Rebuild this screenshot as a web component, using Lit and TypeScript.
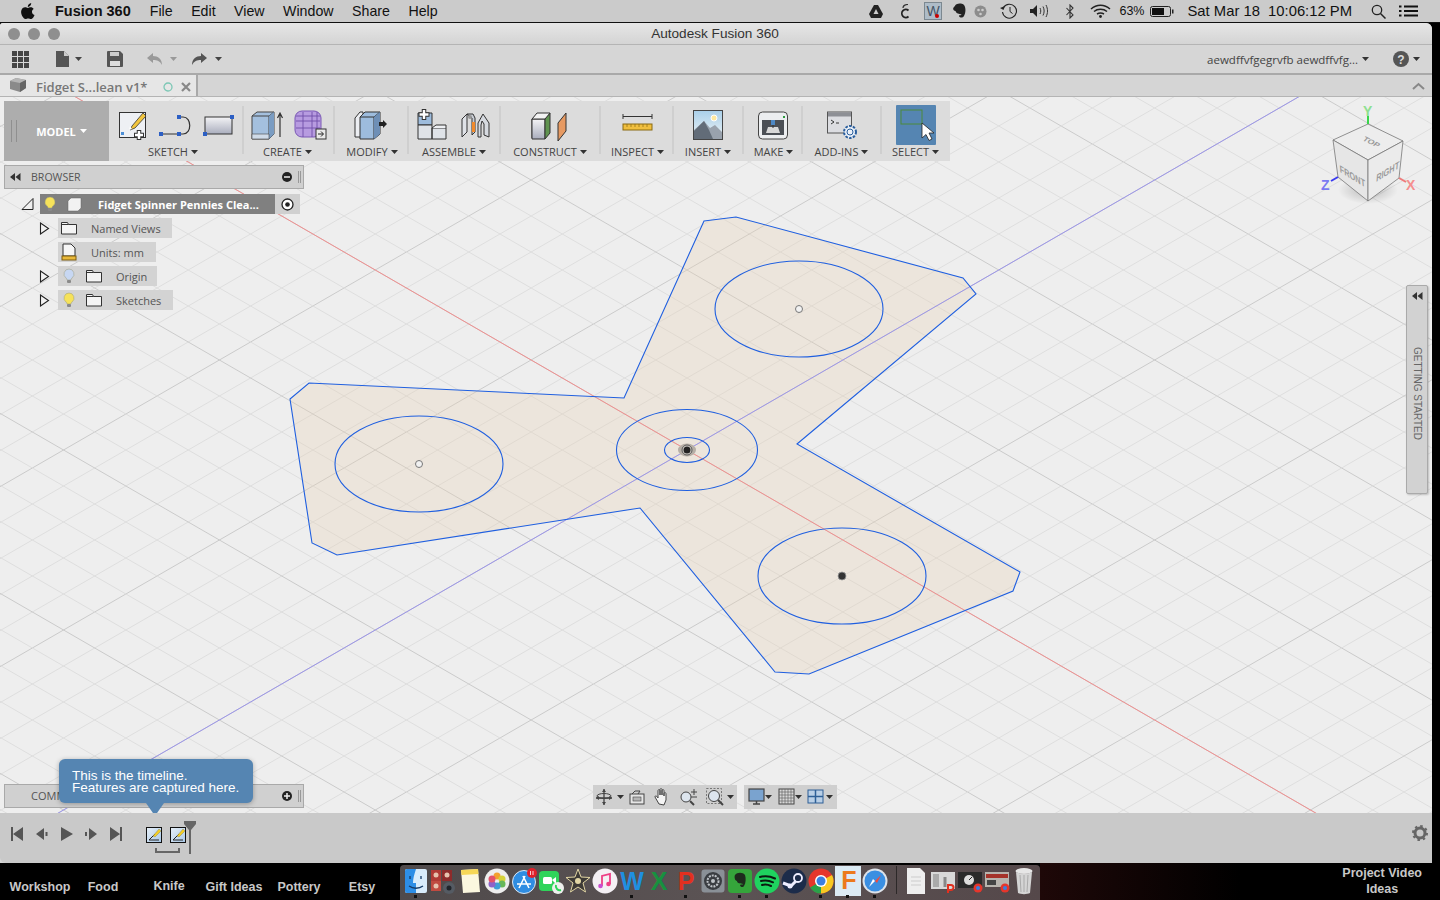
import { LitElement, html, svg, css } from "lit";
import { customElement } from "lit/decorators.js";

const OX = 687, OY = 450, M = 0.5774;
const yAt = (x: number, k: number, s: number) => OY + s * M * (x - OX) + k * 36;
const gridKeys: number[] = [];
for (let k = -45; k <= 45; k++) gridKeys.push(k);

const caret = html`<svg class="caret" width="7" height="4" viewBox="0 0 7 4"><path d="M0 0h7L3.500 4z" fill="currentColor"/></svg>`;

const tool: Record<string, any> = {
  sketch: html`<svg width="32" height="32" viewBox="0 0 32 32"><rect x="2.500" y="3.500" width="26" height="25" fill="#eef0f4" stroke="#333" stroke-width="1"/><rect x="4" y="23" width="3" height="3" fill="#4d8fd6"/><path d="M15 17L26 4l3 3-11 12-5 2z" fill="#f2c53d" stroke="#333" stroke-width=".8"/><path d="M13 17l2 3-3 1z" fill="#fff"/><path d="M22 21v10M17 26h10" stroke="#333" stroke-width="4.500"/><path d="M22 22v8M18 26h8" stroke="#fff" stroke-width="2.500"/></svg>`,
  line: html`<svg width="36" height="32" viewBox="0 0 36 32"><path d="M3 25h18M21 8h4c9 0 9 17 0 17h-4" fill="none" stroke="#333" stroke-width="1.200"/><rect x="1" y="23" width="4" height="4" fill="#2c5fc4"/><rect x="19" y="23" width="4" height="4" fill="#2c5fc4"/><rect x="19" y="6" width="4" height="4" fill="#2c5fc4"/></svg>`,
  rect: html`<svg width="32" height="32" viewBox="0 0 32 32"><defs><linearGradient id="gr" x1="0" y1="0" x2="0" y2="1"><stop offset="0" stop-color="#f4f4f6"/><stop offset="1" stop-color="#a9adbd"/></linearGradient></defs><rect x="2" y="8" width="27" height="17" fill="url(#gr)" stroke="#333"/><rect x="0" y="23" width="4" height="4" fill="#2c5fc4"/><rect x="27" y="6" width="4" height="4" fill="#2c5fc4"/></svg>`,
  box: html`<svg width="34" height="32" viewBox="0 0 34 32"><path d="M1 7l5-4h17v22l-5 5H1z" fill="#a4c0de" stroke="#444"/><path d="M1 7h17v23M18 7l5-4" fill="none" stroke="#444"/><path d="M18 7l5-4v22l-5 5z" fill="#7a9cc2"/><path d="M1 25h17v5H1z" fill="#cfdbe8" stroke="#444" stroke-width=".6"/><path d="M29 28V5M26.500 9L29 4l2.500 5" fill="none" stroke="#333" stroke-width="1.200"/></svg>`,
  mesh: html`<svg width="34" height="32" viewBox="0 0 34 32"><rect x="2" y="2" width="26" height="26" rx="7" fill="#b79be0" stroke="#7a58b5"/><path d="M3 12h24M3 19h24M10 3v25M19 3v25M24 3v25M3 7h24" stroke="#6f4fa8" stroke-width=".9" fill="none"/><rect x="23" y="20" width="10" height="10" fill="#e9e9e9" stroke="#333"/><path d="M25 25h5M28 22.500l2.500 2.500-2.500 2.500" stroke="#222" fill="none"/></svg>`,
  modify: html`<svg width="34" height="32" viewBox="0 0 34 32"><path d="M1 9l5-6h3v25H1z" fill="#eceef2" stroke="#333"/><path d="M6 8l5-5h15v22l-6 5H6z" fill="#9dbcdd" stroke="#333"/><path d="M6 8h14v22M20 8l6-5" fill="none" stroke="#333"/><path d="M20 8l6-5v22l-6 5z" fill="#6e8fb6"/><path d="M25 13h4v-2l4 4-4 4v-2h-4z" fill="#222"/></svg>`,
  assemble: html`<svg width="32" height="32" viewBox="0 0 32 32"><path d="M2 4h14v12H2z" fill="#9dbcdd" stroke="#333"/><path d="M2 16h14v14H2zM16 19h14v11H16z" fill="#dfe3e8" stroke="#333"/><path d="M16 19l4-3h10v3" fill="#eef0f3" stroke="#333"/><path d="M8 0v11M2.500 5.500h11" stroke="#333" stroke-width="4.500"/><path d="M8 1v9M3.500 5.500h9" stroke="#fff" stroke-width="2.500"/></svg>`,
  joint: html`<svg width="32" height="32" viewBox="0 0 32 32"><path d="M2 28V10l5-5v18z" fill="#dfe2e7" stroke="#333"/><path d="M7 5h6l2 4v14l-3 3V9z" fill="#c9ced6" stroke="#333"/><path d="M18 28V14l5-9 6 9v14l-5-2V15l-2-3-1 4v12z" fill="#d6dae0" stroke="#333"/><path d="M12 13h3v10h-3z" fill="#f08a2c"/><circle cx="10" cy="8" r="2" fill="#999"/></svg>`,
  construct: html`<svg width="38" height="32" viewBox="0 0 38 32"><path d="M1 10l5-5v24H1z" fill="#e4e6ea" stroke="#333"/><path d="M1 10h13v20H1z" fill="url(#gr)" stroke="#333"/><path d="M14 10l5-6v20l-5 6z" fill="#5f9350" stroke="#333"/><path d="M1 10l5-6h13l-5 6z" fill="#f3f3f3" stroke="#333"/><path d="M27 14l8-10v18l-8 10z" fill="#e79a62" stroke="#333"/></svg>`,
  inspect: html`<svg width="32" height="32" viewBox="0 0 32 32"><path d="M2 5v5M31 5v5M2 7.500h29" stroke="#333" fill="none"/><rect x="2" y="15" width="29" height="6" fill="#f0bf3f" stroke="#8a6a12"/><path d="M6 15v3M10 15v3M14 15v3M18 15v3M22 15v3M26 15v3" stroke="#8a6a12" stroke-width=".7"/></svg>`,
  insert: html`<svg width="32" height="32" viewBox="0 0 32 32"><defs><linearGradient id="sk" x1="0" y1="0" x2="0" y2="1"><stop offset="0" stop-color="#a9cfe9"/><stop offset="1" stop-color="#eef4f6"/></linearGradient></defs><rect x="1.500" y="1.500" width="29" height="29" fill="url(#sk)" stroke="#444"/><circle cx="22" cy="9" r="3" fill="#ffe9a0" stroke="#fff"/><path d="M2 30V21l10-9 6 7 5-3 7 7v7z" fill="#99a2ad"/><path d="M2 30V22l10-10 5 9 4 9z" fill="#626c78"/></svg>`,
  make: html`<svg width="32" height="32" viewBox="0 0 32 32"><rect x="1.500" y="3" width="29" height="27" rx="4" fill="#eceef0" stroke="#444"/><rect x="5" y="11" width="22" height="15" fill="#4b4f55"/><path d="M9 24l2-6h10l2 6z" fill="#d8d8d8"/><rect x="14" y="11" width="4" height="5" fill="#4e88c4"/><path d="M15.500 16h1v3h-1z" fill="#333"/><rect x="26" y="7" width="2" height="2" fill="#2d9b3f"/></svg>`,
  addins: html`<svg width="32" height="32" viewBox="0 0 32 32"><rect x="1.500" y="3" width="24" height="21" fill="#dcdde1" stroke="#555"/><rect x="2" y="3.500" width="23" height="4" fill="#8d8f95"/><path d="M5 11l3 2-3 2M10 14h3" stroke="#222" fill="none" stroke-width=".9"/><circle cx="24" cy="23" r="6" fill="#eaf0f8" stroke="#2b5f9e" stroke-width="2" stroke-dasharray="2.500 1.300"/><circle cx="24" cy="23" r="3" fill="none" stroke="#2b5f9e"/></svg>`,
  select: html`<svg width="40" height="40" viewBox="0 0 40 40"><rect width="40" height="40" rx="1" fill="#5585b2"/><rect x="5" y="5" width="21" height="14" fill="none" stroke="#4d8a3a" stroke-width="1"/><path d="M26 18v15l4-3.500 3 6 3-1.500-3-6h5z" fill="#fff" stroke="#222" stroke-width=".8"/></svg>`,
};

const groups = [
  { w: 134, label: "SKETCH", icons: ["sketch", "line", "rect"], gap: 9, dx: -3 },
  { w: 91, label: "CREATE", icons: ["box", "mesh"], gap: 8, dx: -1 },
  { w: 74, label: "MODIFY", icons: ["modify"], gap: 0, dx: 1 },
  { w: 92, label: "ASSEMBLE", icons: ["assemble", "joint"], gap: 12, dx: 0 },
  { w: 100, label: "CONSTRUCT", icons: ["construct"], gap: 0, dx: 0 },
  { w: 73, label: "INSPECT", icons: ["inspect"], gap: 0, dx: 1 },
  { w: 70, label: "INSERT", icons: ["insert"], gap: 0, dx: 0 },
  { w: 59, label: "MAKE", icons: ["make"], gap: 0, dx: 1 },
  { w: 79, label: "ADD-INS", icons: ["addins"], gap: 0, dx: 0 },
  { w: 69, label: "SELECT", icons: ["select"], gap: 0, dx: 0 },
];

const bulb = (c: string) => html`<svg width="12" height="16" viewBox="0 0 12 16"><path d="M6 1a5 5 0 0 0-3 9c.8.700 1 1.500 1 2h4c0-.5.200-1.300 1-2A5 5 0 0 0 6 1z" fill="${c}" stroke="#9a9a7a" stroke-width=".5"/><rect x="4" y="12" width="4" height="3" rx="1" fill="#8a8a8a"/></svg>`;
const folder = html`<svg width="16" height="14" viewBox="0 0 16 14"><path d="M.5 13V1.500h6l1 2h8V13z" fill="#f4f4f4" stroke="#333"/><path d="M.5 3.500h7" stroke="#333"/></svg>`;
const expander = html`<svg class="exp" width="11" height="13" viewBox="0 0 11 13"><path d="M1.500 1v11L9.500 6.500z" fill="#f2f2f2" stroke="#222" stroke-width="1.100"/></svg>`;
const unitsIc = html`<svg width="16" height="18" viewBox="0 0 16 18"><path d="M2 1h8l4 4v8H2z" fill="#f6f6f6" stroke="#333"/><rect x="1" y="13" width="14" height="4" fill="#e9b93a" stroke="#7c5d10"/></svg>`;
const sketchMini = html`<svg width="16" height="16" viewBox="0 0 16 16"><defs><linearGradient id="mini" x1="0" y1="0" x2="1" y2="1"><stop offset="0" stop-color="#e8f0f8"/><stop offset="1" stop-color="#a8c8e8"/></linearGradient></defs><rect x=".5" y=".5" width="15" height="15" fill="url(#mini)" stroke="#111"/><path d="M3 13h10M3 13l6-6" stroke="#222" fill="none"/><path d="M7 9l6-7 2 2-6 6z" fill="#f4cf25" stroke="#775" stroke-width=".4"/></svg>`;

const statusIcons = [
  { ml: 0, ic: html`<svg width="14" height="13" viewBox="0 0 14 13"><path d="M5 0h4l5 9-2 4H2L0 9z" fill="#222"/><path d="M7 4l2.500 5h-5z" fill="#cbcbcb"/></svg>` },
  { ml: 16, ic: html`<svg width="13" height="15" viewBox="0 0 13 15"><path d="M9.500 6.500a4 4 0 1 0 0 6" fill="none" stroke="#222" stroke-width="1.800"/><path d="M4 4c0-2 2-3.500 5-3.500" fill="none" stroke="#333" stroke-width="1.200"/></svg>` },
  { ml: 12, ic: html`<svg width="18" height="18" viewBox="0 0 18 18"><rect x=".5" y=".5" width="17" height="17" fill="#aebcc8" stroke="#7c8890"/><text x="9" y="14" text-anchor="middle" font-family="Liberation Sans" font-size="14" fill="#456">W</text><circle cx="13" cy="14" r="2" fill="#c00"/></svg>` },
  { ml: 10, ic: html`<svg width="14" height="17" viewBox="0 0 14 17"><path d="M3 3c0-2.500 6-3.500 8.500-1.500 2.500 2 2.500 8 .5 11.500-1.500 2.500-5 1.500-5 0 0-1.300 2.500-.5 2.500-1.500-2.500-1-5-.5-6-3.500-2.500 0-3.500-3-.5-5z" fill="#222"/></svg>` },
  { ml: 8, ic: html`<svg width="13" height="13" viewBox="0 0 13 13"><circle cx="6.500" cy="6.500" r="6" fill="#8c8c8c"/><circle cx="4.500" cy="5" r="1.300" fill="#ccc"/><circle cx="8.500" cy="5" r="1.300" fill="#ccc"/><circle cx="6.500" cy="9" r="1.300" fill="#ccc"/></svg>` },
  { ml: 13, ic: html`<svg width="18" height="16" viewBox="0 0 18 16"><path d="M3.500 4.500A7 7 0 1 1 2.500 9" fill="none" stroke="#222" stroke-width="1.100"/><path d="M0 5l3.500 2L5 3z" fill="#222"/><path d="M10 4v4.500l2.500 2" fill="none" stroke="#222"/></svg>` },
  { ml: 12, ic: html`<svg width="20" height="14" viewBox="0 0 20 14"><path d="M0 5h3l4-4v12l-4-4H0z" fill="#222"/><path d="M10 4c1 2 1 4 0 6M13 2.500c1.500 3 1.500 6 0 9M16 1c2 4 2 8 0 12" fill="none" stroke="#333"/></svg>` },
  { ml: 15, ic: html`<svg width="10" height="15" viewBox="0 0 10 15"><path d="M1.500 4l6.500 7L5 14V1l3 3L1.500 11" fill="none" stroke="#333" stroke-width="1.100"/></svg>` },
  { ml: 15, ic: html`<svg width="21" height="14" viewBox="0 0 21 14"><path d="M1 5c5.500-5 13.500-5 19 0M4 7.500c3.500-3 9.500-3 13 0M7 10c2.500-1.500 4.500-1.500 7 0" fill="none" stroke="#222" stroke-width="1.500"/><circle cx="10.500" cy="12.500" r="1.400" fill="#222"/></svg>` },
];

const qatLeft = [
  { ml: 0, ic: html`<svg width="17" height="17" viewBox="0 0 17 17"><path d="M0 0h5v5H0zM6 0h5v5H6zM12 0h5v5h-5zM0 6h5v5H0zM6 6h5v5H6zM12 6h5v5h-5zM0 12h5v5H0zM6 12h5v5H6zM12 12h5v5h-5z" fill="#444"/></svg>` },
  { ml: 27, ic: html`<svg width="13" height="16" viewBox="0 0 13 16"><path d="M0 0h8l5 5v11H0z" fill="#555"/><path d="M8 0v5h5" fill="#ccc"/></svg>` },
  { ml: 6, ic: html`<svg width="7" height="4" viewBox="0 0 7 4"><path d="M0 0h7L3.500 4z" fill="#444"/></svg>` },
  { ml: 25, ic: html`<svg width="16" height="16" viewBox="0 0 16 16"><path d="M0 1a1 1 0 0 1 1-1h12l3 3v12a1 1 0 0 1-1 1H1a1 1 0 0 1-1-1z" fill="#555"/><rect x="3" y="1" width="9" height="4" fill="#ccc"/><rect x="3" y="10" width="10" height="5" fill="#ddd"/></svg>` },
  { ml: 24, ic: html`<svg width="16" height="13" viewBox="0 0 16 13"><path d="M6 0L0 5l6 5V7c4 0 7 1 9 5 0-6-4-9-9-9z" fill="#999"/></svg>` },
  { ml: 7, ic: html`<svg width="7" height="4" viewBox="0 0 7 4"><path d="M0 0h7L3.500 4z" fill="#999"/></svg>` },
  { ml: 14, ic: html`<svg width="16" height="13" viewBox="0 0 16 13"><path d="M10 0l6 5-6 5V7c-4 0-7 1-9 5 0-6 4-9 9-9z" fill="#555"/></svg>` },
  { ml: 8, ic: html`<svg width="7" height="4" viewBox="0 0 7 4"><path d="M0 0h7L3.500 4z" fill="#444"/></svg>` },
];

const ink = "#444";
const navA = [
  { ml: 0, ic: html`<svg width="22" height="18" viewBox="0 0 22 18"><path d="M9 1v16M1 10h16" stroke="${ink}" stroke-width="1.300"/><path d="M9 1l-2 3h4zM1 10l3-2v4zM17 10l-3-2v4zM9 17l-2-3h4z" fill="${ink}"/><ellipse cx="9" cy="8" rx="7" ry="2.500" fill="none" stroke="${ink}"/></svg>` },
  { ml: 0, ic: caret },
  { ml: 3, ic: html`<svg width="20" height="18" viewBox="0 0 20 18"><rect x="3" y="6" width="14" height="10" fill="#e6e6e6" stroke="${ink}"/><rect x="6" y="9" width="8" height="4" fill="#b5b5b5" stroke="${ink}" stroke-width=".6"/><path d="M5 6l3-3h5l-2 3" fill="none" stroke="${ink}"/></svg>` },
  { ml: 6, ic: html`<svg width="20" height="18" viewBox="0 0 20 18"><path d="M6 16L2 9c0-2 2-1 3 1V3c0-2 2-2 2 0v4-5c0-2 2-2 2 0v5-4c0-2 2-2 2 0v5-2c0-2 2-2 2 0v6l-2 5z" fill="#f4f4f4" stroke="${ink}"/></svg>` },
  { ml: 6, ic: html`<svg width="20" height="18" viewBox="0 0 20 18"><circle cx="7" cy="9" r="5" fill="#dde5ee" stroke="${ink}"/><path d="M11 13l4 4" stroke="${ink}" stroke-width="2"/><path d="M15 1v6M12 4h6M12 9h6" stroke="${ink}"/></svg>` },
  { ml: 7, ic: html`<svg width="20" height="18" viewBox="0 0 20 18"><rect x=".5" y=".5" width="15" height="15" fill="none" stroke="#777" stroke-dasharray="2 1.500"/><circle cx="8" cy="8" r="5.500" fill="#dde5ee" stroke="${ink}"/><path d="M12 12l5 5" stroke="${ink}" stroke-width="2"/></svg>` },
  { ml: 1, ic: caret },
];
const navB = [
  { ml: 1, ic: html`<svg width="20" height="18" viewBox="0 0 20 18"><rect x="2" y="1" width="15" height="12" fill="#7aa3cf" stroke="${ink}" stroke-width="1.200"/><path d="M6 16h7M9.500 13v3" stroke="${ink}" stroke-width="1.500"/></svg>` },
  { ml: -2, ic: caret },
  { ml: 6, ic: html`<svg width="18" height="18" viewBox="0 0 18 18"><rect x="1" y="1" width="15" height="15" fill="#d9d9d9" stroke="${ink}"/><path d="M4 1v15M7 1v15M10 1v15M13 1v15M1 4h15M1 7h15M1 10h15M1 13h15" stroke="#666" stroke-width=".7"/></svg>` },
  { ml: -1, ic: caret },
  { ml: 5, ic: html`<svg width="18" height="18" viewBox="0 0 18 18"><rect x="1" y="2" width="15" height="13" fill="#b9cfe6" stroke="#2e5f96"/><path d="M8.500 2v13M1 8.500h15" stroke="#2e5f96" stroke-width="1.500"/></svg>` },
  { ml: 1, ic: caret },
];
const place = (items: { ml: number; ic: any }[]) =>
  items.map((i) => html`<span class="pl" style="margin-left:${i.ml}px">${i.ic}</span>`);

const docIcons: { n: string; dot?: boolean; ic: any }[] = [
  { n: "finder", dot: true, ic: html`<svg width="24" height="26" viewBox="0 0 24 26"><rect x="1" y="1" width="22" height="24" rx="2" fill="#d9ecfb"/><path d="M1 3a2 2 0 0 1 2-2h9c-2 6-3 10-3 14h3v10H3a2 2 0 0 1-2-2z" fill="#2d8ee6"/><path d="M6 8v3M17 8v3M5 18c4 3 10 3 14 0" stroke="#153a66" stroke-width="1.300" fill="none"/></svg>` },
  { n: "booth", ic: html`<svg width="26" height="26" viewBox="0 0 26 26"><rect x="1" y="2" width="10" height="11" fill="#b03a35"/><rect x="12" y="2" width="10" height="11" fill="#8e2b2b"/><rect x="1" y="13" width="10" height="10" fill="#c04a40"/><circle cx="6" cy="7" r="2.500" fill="#e7c2ae"/><circle cx="17" cy="7" r="2.500" fill="#e7c2ae"/><circle cx="6" cy="18" r="2.500" fill="#e7c2ae"/><circle cx="19" cy="20" r="6" fill="#555b63"/><circle cx="19" cy="20" r="2.500" fill="#20242a"/></svg>` },
  { n: "notes", ic: html`<svg width="22" height="26" viewBox="0 0 22 26"><path d="M2 2l17-1 2 23-17 1z" fill="#fbf7df"/><path d="M2 2l17-1 .5 5L2.500 7z" fill="#f6d757"/></svg>` },
  { n: "photos", ic: html`<svg width="26" height="26" viewBox="0 0 26 26"><circle cx="13" cy="13" r="12.500" fill="#eee"/><circle cx="13" cy="8" r="3.500" fill="#f3a12f"/><circle cx="18" cy="11" r="3.500" fill="#d6d33b"/><circle cx="18" cy="16" r="3.500" fill="#67b85a"/><circle cx="13" cy="18" r="3.500" fill="#3f9fd6"/><circle cx="8" cy="16" r="3.500" fill="#8d63c9"/><circle cx="8" cy="11" r="3.500" fill="#e4526b"/></svg>` },
  { n: "store", ic: html`<svg width="26" height="26" viewBox="0 0 26 26"><circle cx="13" cy="14" r="11.500" fill="#2f8de2" stroke="#dfe8f2"/><path d="M8 20l6-12M18 20L12 8M6 16h14" stroke="#fff" stroke-width="1.600" fill="none"/><circle cx="21" cy="5" r="5" fill="#e0202a"/><path d="M19.500 3v4M22 3v4" stroke="#fff" stroke-width=".8"/></svg>` },
  { n: "facetime", ic: html`<svg width="26" height="26" viewBox="0 0 26 26"><rect x="1" y="3" width="20" height="20" rx="4" fill="#2fd45a"/><rect x="5" y="9" width="9" height="7" rx="1.500" fill="#fff"/><path d="M14 12l4-3v7z" fill="#fff"/><circle cx="20" cy="20" r="6" fill="#eef0ee"/><path d="M18 17c-1 3 2 6 5 5" stroke="#2fd45a" stroke-width="2" fill="none"/></svg>` },
  { n: "imovie", ic: html`<svg width="26" height="26" viewBox="0 0 26 26"><path d="M13 1l3 8 9 .5-7 5.500 2.500 9L13 19l-7.500 5L8 15 1 9.500 10 9z" fill="#3d3a36" stroke="#e2d6a4" stroke-width="1"/><circle cx="13" cy="13" r="3" fill="#e2d6a4"/></svg>` },
  { n: "itunes", ic: html`<svg width="26" height="26" viewBox="0 0 26 26"><circle cx="13" cy="13" r="12.500" fill="#f4f0f4"/><path d="M10 18V8l8-2v10" stroke="#ee3f86" stroke-width="1.800" fill="none"/><circle cx="8.500" cy="18" r="2.300" fill="#c84fd0"/><circle cx="16.500" cy="16" r="2.300" fill="#ee3f86"/></svg>` },
  { n: "word", dot: true, ic: html`<svg width="26" height="26" viewBox="0 0 26 26"><text class="logo" x="13" y="22" fill="#1f8fe0">W</text></svg>` },
  { n: "excel", ic: html`<svg width="26" height="26" viewBox="0 0 26 26"><text class="logo" x="13" y="22" fill="#17913f">X</text></svg>` },
  { n: "ppt", dot: true, ic: html`<svg width="26" height="26" viewBox="0 0 26 26"><text class="logo" x="13" y="22" fill="#e3301f">P</text></svg>` },
  { n: "prefs", ic: html`<svg width="24" height="24" viewBox="0 0 24 24"><rect x=".5" y=".5" width="23" height="23" rx="3" fill="#8a9097"/><circle cx="12" cy="12" r="9" fill="#3a3d42"/><circle cx="12" cy="12" r="5.500" fill="none" stroke="#bfc3c8" stroke-width="2" stroke-dasharray="2 1"/><circle cx="12" cy="12" r="2" fill="#bfc3c8"/></svg>` },
  { n: "evernote", dot: true, ic: html`<svg width="26" height="26" viewBox="0 0 26 26"><rect x="1" y="1" width="24" height="24" rx="4" fill="#35a53b"/><path d="M8 7c2-3 8-3 10 0 1 3 1 8-1 11-1 2-4 1-4-1 1-1 3 0 3-1-2-1-6 0-6-3-2 0-3-4-2-6z" fill="#1e2a1d"/></svg>` },
  { n: "spotify", dot: true, ic: html`<svg width="26" height="26" viewBox="0 0 26 26"><circle cx="13" cy="13" r="12.500" fill="#1fd35f"/><path d="M6 9c5-1.500 10-1 15 1.500M7 13c4-1 8-.7 12 1.300M8 17c3-.8 6-.5 9 1" stroke="#0b1a10" stroke-width="2" fill="none" stroke-linecap="round"/></svg>` },
  { n: "steam", ic: html`<svg width="26" height="26" viewBox="0 0 26 26"><circle cx="13" cy="13" r="12.500" fill="#1c2c4a"/><circle cx="17" cy="10" r="4" fill="none" stroke="#eef" stroke-width="1.800"/><path d="M2 15l8 3 5-5" stroke="#eef" stroke-width="3" fill="none"/><circle cx="9" cy="18" r="2.500" fill="#eef"/></svg>` },
  { n: "chrome", dot: true, ic: html`<svg width="26" height="26" viewBox="0 0 26 26"><circle cx="13" cy="13" r="12.500" fill="#e5362c"/><path d="M13 13L2.200 19.500A12.500 12.500 0 0 0 13 25.500z" fill="#2aa14a"/><path d="M13 13v12.500A12.500 12.500 0 0 0 24 7z" fill="#f8c922"/><circle cx="13" cy="13" r="6" fill="#fff"/><circle cx="13" cy="13" r="4.500" fill="#3a7fe0"/></svg>` },
  { n: "fusion", dot: true, ic: html`<svg width="26" height="30" viewBox="0 0 26 30"><rect width="26" height="30" fill="#dcebf4"/><text class="logo" x="14" y="23" fill="#ec7a1c">F</text></svg>` },
  { n: "safari", dot: true, ic: html`<svg width="26" height="26" viewBox="0 0 26 26"><circle cx="13" cy="13" r="12.500" fill="#dde3ea"/><circle cx="13" cy="13" r="10.500" fill="#3a8fe2"/><path d="M19 7l-4 8-2-2z" fill="#f24a3c"/><path d="M7 19l4-8 2 2z" fill="#fff"/></svg>` },
];
const docRight = [
  html`<svg width="22" height="28" viewBox="0 0 22 28"><path d="M2 1h13l5 5v21H2z" fill="#eeeeee"/><path d="M6 10h10M6 14h10M6 18h10" stroke="#ccc"/></svg>`,
  html`<svg width="26" height="24" viewBox="0 0 26 24"><rect x="1" y="3" width="24" height="17" fill="#d8d8d8"/><rect x="3" y="5" width="6" height="13" fill="#aaa"/><path d="M15 8v10" stroke="#888" stroke-width="3"/><path d="M18 24v-8h3a2 2 0 0 1 0 5h-3" fill="none" stroke="#e3301f" stroke-width="2"/></svg>`,
  html`<svg width="26" height="24" viewBox="0 0 26 24"><rect x="1" y="3" width="24" height="16" fill="#2a2a2a"/><circle cx="12" cy="11" r="5" fill="#ddd"/><path d="M12 11l3-3" stroke="#222"/><circle cx="21" cy="19" r="4.500" fill="#e5362c"/><circle cx="21" cy="19" r="2" fill="#3a7fe0"/></svg>`,
  html`<svg width="26" height="24" viewBox="0 0 26 24"><rect x="1" y="3" width="24" height="15" fill="#b8b4ae"/><rect x="2" y="5" width="22" height="4" fill="#a5332a"/><rect x="3" y="11" width="9" height="5" fill="#444"/><circle cx="21" cy="19" r="4.500" fill="#e5362c"/><circle cx="21" cy="19" r="2" fill="#3a7fe0"/></svg>`,
  html`<svg width="20" height="28" viewBox="0 0 20 28"><ellipse cx="10" cy="4" rx="8.500" ry="3" fill="#e6e6e6"/><path d="M2 5l2 21c3 1.500 9 1.500 12 0l2-21c-4 2-12 2-16 0z" fill="#d4d4d4"/><path d="M6 8l1 17M10 8v17M14 8l-1 17" stroke="#aaa"/></svg>`,
];

const sketchPts = "704,221 736,217 963,278 976,294 797,444 1020,572 1013,591 809,674 775,672 640,508 337,555 312,543 290,399 309,383 624,398";

@customElement("app-root")
export class AppRoot extends LitElement {
  static styles = css`
    :host { display: block; width: 1440px; height: 900px; overflow: hidden; font-family: "Open Sans", "Liberation Sans", sans-serif; background: #000; }
    .pl { display: block; flex: none; }
    .pl svg { display: block; }
    .menubar { height: 22px; background: #cbcbcb; border-bottom: 1px solid #111; display: flex; align-items: center; font-family: "Liberation Sans", sans-serif; font-size: 14.2px; color: #111; }
    .menus { display: flex; align-items: center; padding-left: 21px; flex: 1; }
    .menus .apple { margin-right: 20px; display: block; }
    .menus b { margin-right: 19px; font-size: 14.500px; }
    .menus span { margin-right: 18.500px; }
    .status { display: flex; align-items: center; }
    .status svg { display: block; }
    .pct { font-size: 12.500px; margin-left: 8px; }
    .batt { margin-left: 5px; }
    .clock { margin-left: 14px; font-size: 14.800px; white-space: pre; }
    .search { margin-left: 19px; }
    .list { margin: 0 22px 0 13px; }
    .win { width: 1432px; height: 840px; background: #d5d5d5; border-radius: 3px 6px 0 0; display: flex; flex-direction: column; overflow: hidden; }
    .title { height: 21px; background: linear-gradient(#e6e6e6, #d4d4d4); border-bottom: 1px solid #b4b4b4; display: flex; align-items: center; position: relative; padding-left: 8px; gap: 8px; flex: none; }
    .light { width: 12px; height: 12px; border-radius: 50%; background: #8f8f8f; }
    .title-text { position: absolute; left: 0; width: 1430px; top: 3px; text-align: center; font-family: "Liberation Sans", sans-serif; font-size: 13.600px; color: #333; }
    .qat { height: 28px; flex: none; display: flex; align-items: center; background: #d6d6d6; border-bottom: 2px solid #a9a9a9; padding-left: 12px; }
    .qat svg { display: block; }
    .qat .account { margin-left: auto; font-size: 11.500px; color: #444; display: flex; align-items: center; gap: 4px; }
    .qat .help { margin: 0 12px 0 24px; display: flex; align-items: center; gap: 4px; color: #444; }
    .tabs { height: 21px; flex: none; display: flex; background: #d5d5d5; border-bottom: 1px solid #b4b4b4; color: #666; align-items: stretch; }
    .tab { width: 198px; background: #e6e6e6; border-right: 2px solid #a9a9a9; display: flex; align-items: center; padding: 3px 0 0 10px; box-sizing: border-box; font-size: 13px; font-weight: 600; color: #777; }
    .tab > svg:first-child { margin-top: -5px; }
    .tab .name { margin-left: 10px; width: 113px; white-space: nowrap; }
    .tab .o { margin-left: 14px; }
    .tab .x { margin-left: 8px; }
    .chev { margin-left: auto; margin-right: 7px; align-self: center; }
    .canvas { flex: 1; position: relative; background: #eeeeee; overflow: hidden; }
    .canvas > svg.scene { display: block; }
    .ribbon { position: absolute; left: 4px; top: 4px; height: 60px; display: flex; background: #dcdcdc; }
    .model { width: 105px; background: #adadad; color: #fff; display: flex; align-items: center; justify-content: center; gap: 4px; font-size: 11px; font-weight: 700; position: relative; padding-left: 10px; box-sizing: border-box; }
    .model::before { content: ""; position: absolute; left: 7px; top: 19px; width: 4px; height: 22px; border-left: 1px solid #8f8f8f; border-right: 1px solid #8f8f8f; }
    .group { display: flex; flex-direction: column; align-items: center; position: relative; box-sizing: border-box; padding-top: 4px; }
    .group + .group::before { content: ""; position: absolute; left: -1px; top: 5px; bottom: 7px; width: 2px; background: #cfcfcf; }
    .icons { height: 40px; display: flex; align-items: center; justify-content: center; }
    .icons svg { display: block; }
    .label { font-size: 11px; color: #444; display: flex; align-items: center; gap: 3px; line-height: 14px; white-space: nowrap; }
    .caret { display: block; color: #333; }
    .panel { position: absolute; left: 4px; width: 300px; height: 24px; box-sizing: border-box; background: #d0d0d0; border: 1px solid #a9a9a9; display: flex; align-items: center; font-size: 11px; color: #555; }
    .panel.browser { top: 68px; padding-left: 5px; }
    .panel.browser .t { margin-left: 10px; font-size: 10.600px; }
    .panel.comm { top: 687px; padding: 0 0 1px 26px; }
    .panel .end { margin-left: auto; margin-right: 2px; display: flex; align-items: center; gap: 6px; }
    .grip { width: 3px; height: 12px; border-left: 1px solid #999; border-right: 1px solid #999; box-sizing: border-box; }
    .tree { position: absolute; left: 0; top: 97px; font-size: 11px; color: #555; display: flex; flex-direction: column; gap: 4px; }
    .row { height: 20px; display: flex; align-items: center; position: relative; }
    .exp { position: absolute; left: 39px; top: 4px; }
    .box { margin-left: 58px; height: 20px; background: #d3d3d3; display: flex; align-items: center; box-sizing: border-box; white-space: nowrap; }
    .box svg { display: block; flex: none; }
    .m18 { margin: 0 14px 0 3px; display: flex; }
    .m-u { margin: 0 14px 0 3px; display: flex; }
    .m-b { margin: 0 11px 0 5px; display: flex; }
    .m-f { margin-right: 14px; display: flex; }
    .r0 { margin-left: 21px; gap: 0; }
    .r0 .tri { display: block; margin-right: 6px; }
    .r0 .dark { width: 235px; height: 20px; background: #808080; color: #fff; font-weight: 700; display: flex; align-items: center; box-sizing: border-box; padding-left: 4px; white-space: nowrap; }
    .r0 .cb { margin: 0 16px 0 11px; }
    .r0 .tail { width: 25px; height: 20px; background: #d0d0d0; display: flex; align-items: center; justify-content: center; }
    .tip { position: absolute; left: 59px; top: 662px; width: 194px; height: 44px; background: #5585b2; border-radius: 6px; color: #fff; font-family: "Liberation Sans", sans-serif; font-size: 13.500px; line-height: 12px; padding: 11px 0 0 13px; box-sizing: border-box; box-shadow: 0 1px 5px rgba(0,0,0,.3); z-index: 2; white-space: nowrap; }
    .tip::after { content: ""; position: absolute; left: 87px; bottom: -13px; border: 9px solid transparent; border-bottom: 0; border-top: 13px solid #5585b2; }
    .nav { position: absolute; top: 688px; height: 24px; background: #cfcfcf; display: flex; align-items: center; color: #333; box-sizing: border-box; padding-left: 2px; }
    .nav svg { display: block; }
    .nav.a { left: 593px; width: 144px; }
    .nav.b { left: 744px; width: 93px; }
    .cube { position: absolute; left: 1310px; top: 0; display: block; }
    .cube text { font-family: "Liberation Sans", sans-serif; font-weight: 700; }
    .gs { position: absolute; left: 1406px; top: 188px; width: 22px; height: 209px; box-sizing: border-box; background: #d2d2d2; border: 1px solid #aaa; border-radius: 2px; box-shadow: 1px 1px 2px rgba(0,0,0,.2); display: flex; flex-direction: column; align-items: center; padding-top: 6px; }
    .gs .v { writing-mode: vertical-rl; font-family: "Liberation Sans", sans-serif; font-size: 10px; color: #666; margin-top: 47px; white-space: nowrap; }
    .timeline { height: 50px; flex: none; background: #c9c9c9; display: flex; align-items: center; padding-left: 10px; position: relative; border-radius: 0 0 0 6px; }
    .timeline svg { display: block; }
    .tl-ctl { display: flex; align-items: center; gap: 10px; color: #555; margin-top: -8px; }
    .tl-ctl .g1 { margin-left: 1px; }
    .feat { display: flex; gap: 8px; margin-left: 23px; margin-top: -6px; }
    .bracket { position: absolute; left: 155px; top: 35px; width: 25px; height: 5px; border: 2px solid #666; border-top: 0; box-sizing: border-box; }
    .marker { position: absolute; left: 184px; top: 8px; }
    .gear { position: absolute; right: 4px; top: 12px; }
    .bottom { height: 37px; background: #000; position: relative; display: flex; font-family: "Liberation Sans", sans-serif; font-weight: 700; font-size: 12.500px; color: #c8c8c8; }
    .marks { width: 400px; position: relative; display: flex; padding-top: 17px; }
    .marks span { position: absolute; transform: translateX(-50%); white-space: nowrap; }
    .dock { width: 640px; height: 35px; margin-top: 2px; background: linear-gradient(90deg, #4f4a4b, #5b5354 50%, #55484a); border-radius: 4px 4px 0 0; display: flex; align-items: flex-start; padding-left: 2px; box-sizing: border-box; }
    .slot { width: 27px; height: 31px; flex: none; display: flex; align-items: center; justify-content: center; position: relative; }
    .slot svg { display: block; }
    .slot.dot::after { content: ""; position: absolute; left: 12px; top: 30px; width: 3px; height: 3px; background: #111; }
    .sep { width: 1px; height: 28px; margin: 1px 5px 0 8px; background: #2c2828; flex: none; }
    .logo { font-family: "Liberation Sans", sans-serif; font-weight: 700; font-size: 25px; text-anchor: middle; }
    .gl { position: relative; flex: 1; }
    .glow { position: absolute; left: 0; top: 0; width: 200px; height: 37px; background: linear-gradient(90deg, #1e0808, #000); }
    .proj { position: absolute; right: 18px; top: 2px; text-align: center; line-height: 16px; }
  `;

  private scene() {
    const lines = gridKeys.map((k) => {
      const stroke = k % 5 === 0 ? "#cbcbcb" : "#dedede";
      return svg`<line x1="0" y1="${yAt(0, k, 1)}" x2="1432" y2="${yAt(1432, k, 1)}" stroke="${stroke}"/><line x1="0" y1="${yAt(0, k, -1)}" x2="1432" y2="${yAt(1432, k, -1)}" stroke="${stroke}"/>`;
    });
    return html`<svg class="scene" width="1432" height="716" viewBox="0 97 1432 716">
      ${lines}
      <polygon points="${sketchPts}" fill="#e8d0b4" fill-opacity=".3"/>
      <line x1="0" y1="${yAt(0, 0, 1)}" x2="1432" y2="${yAt(1432, 0, 1)}" stroke="#f09090"/>
      <line x1="0" y1="${yAt(0, 0, -1)}" x2="1432" y2="${yAt(1432, 0, -1)}" stroke="#9c96ea"/>
      <polygon points="${sketchPts}" fill="none" stroke="#1f5fe0" stroke-width="1.100"/>
      <ellipse cx="799" cy="309" rx="84" ry="48" fill="none" stroke="#1f5fe0" stroke-width="1.100"/>
      <ellipse cx="419" cy="464" rx="84" ry="48" fill="none" stroke="#1f5fe0" stroke-width="1.100"/>
      <ellipse cx="842" cy="576" rx="84" ry="48" fill="none" stroke="#1f5fe0" stroke-width="1.100"/>
      <ellipse cx="687" cy="450" rx="70.500" ry="40.500" fill="none" stroke="#1f5fe0" stroke-width="1.100"/>
      <ellipse cx="687" cy="450" rx="22.500" ry="12.500" fill="none" stroke="#1f5fe0" stroke-width="1.100"/>
      <circle cx="799" cy="309" r="3.500" fill="#f2f2f2" stroke="#777"/>
      <circle cx="419" cy="464" r="3.500" fill="#f2f2f2" stroke="#777"/>
      <circle cx="842" cy="576" r="4" fill="#333" stroke="#999" stroke-width=".8"/>
      <ellipse cx="687" cy="450" rx="9" ry="6.500" fill="#b5aea6"/>
      <circle cx="687" cy="450" r="5" fill="#d8d4ce" stroke="#555"/>
      <circle cx="687" cy="450" r="3.500" fill="#222"/>
    </svg>`;
  }

  private ribbon() {
    return html`<div class="ribbon">
      <div class="model">MODEL <svg width="7" height="4" viewBox="0 0 7 4"><path d="M0 0h7L3.500 4z" fill="#fff"/></svg></div>
      ${groups.map(
        (g) => html`<div class="group" style="width:${g.w}px">
          <div class="icons" style="gap:${g.gap}px">${g.icons.map((i) => tool[i])}</div>
          <div class="label" style="transform:translateX(${g.dx}px)">${g.label} ${caret}</div>
        </div>`
      )}
    </div>`;
  }

  private tree() {
    const row = (expand: boolean, w: number, content: any) => html`<div class="row">${expand ? expander : ""}<div class="box" style="width:${w}px">${content}</div></div>`;
    return html`<div class="tree">
      <div class="row r0">
        <svg class="tri" width="13" height="12" viewBox="0 0 13 12"><path d="M1 11.500L12 .5v11z" fill="#efefef" stroke="#222"/></svg>
        <div class="dark">${bulb("#f6e25a")}<svg class="cb" width="15" height="15" viewBox="0 0 15 15"><path d="M1 4l3-3h10v10l-3 3H1z" fill="#f2f2f2" stroke="#666" stroke-width=".5"/></svg>Fidget Spinner Pennies Clea...</div>
        <div class="tail"><svg width="13" height="13" viewBox="0 0 13 13"><circle cx="6.500" cy="6.500" r="5.500" fill="#fff" stroke="#222" stroke-width="1.300"/><circle cx="6.500" cy="6.500" r="2.300" fill="#222"/></svg></div>
      </div>
      ${row(true, 114, html`<span class="m18">${folder}</span>Named Views`)}
      ${row(false, 98, html`<span class="m-u">${unitsIc}</span>Units: mm`)}
      ${row(true, 99, html`<span class="m-b">${bulb("#c7d7f2")}</span><span class="m-f">${folder}</span>Origin`)}
      ${row(true, 115, html`<span class="m-b">${bulb("#f6e25a")}</span><span class="m-f">${folder}</span>Sketches`)}
    </div>`;
  }

  private cube() {
    return html`<svg class="cube" width="122" height="110" viewBox="1310 97 122 110">
      <defs><radialGradient id="sh"><stop offset="0" stop-color="#000" stop-opacity=".22"/><stop offset="1" stop-color="#000" stop-opacity="0"/></radialGradient></defs>
      <ellipse cx="1368" cy="190" rx="30" ry="14" fill="url(#sh)"/>
      <path d="M1368 124l35 17-35 19-35-20z" fill="#ededed" stroke="#777" stroke-width=".8"/>
      <path d="M1333 140l35 20v41l-30-24z" fill="#e6e6e6" stroke="#777" stroke-width=".8"/>
      <path d="M1403 141l-35 19v41l31-23z" fill="#ebebeb" stroke="#777" stroke-width=".8"/>
      <path d="M1368 124v-8" stroke="#38d64a" stroke-width="2"/>
      <path d="M1338 177l-7 4" stroke="#3b3bf0" stroke-width="2"/>
      <path d="M1399 178l7 4" stroke="#f07a7a" stroke-width="2"/>
      <text x="1363" y="116" font-size="14" fill="#8fe08f">Y</text>
      <text x="1321" y="190" font-size="14" fill="#7a7af2">Z</text>
      <text x="1406" y="190" font-size="14" fill="#f58f8f">X</text>
      <text font-size="9" fill="#9a9a9a" transform="matrix(.85 .42 -.55 .6 1362 140)">TOP</text>
      <text font-size="9" fill="#9a9a9a" transform="matrix(.82 .5 .1 1.150 1340 172)">FRONT</text>
      <text font-size="9" fill="#9a9a9a" transform="matrix(.82 -.5 -.1 1.150 1376 182)">RIGHT</text>
    </svg>`;
  }

  render() {
    return html`
      <div class="menubar">
        <div class="menus">
          <svg class="apple" width="14" height="16" viewBox="0 0 14 16"><path d="M10.200 0c.1 1.200-.4 2.100-1 2.800-.6.700-1.500 1.200-2.400 1.100-.1-1 .4-2 1-2.700C8.400.6 9.400.1 10.200 0zM13.500 12c-.4 1-.6 1.400-1.100 2.200-.7 1-1.600 1.800-2.600 1.800-1 0-1.300-.6-2.600-.6-1.300 0-1.700.6-2.700.6-1.100 0-1.900-1-2.600-2C.2 11.700-.5 8.500.7 6.500 1.400 5.100 2.700 4.300 4 4.300c1.200 0 2 .7 2.900.7.900 0 1.500-.7 2.900-.7 1.100 0 2.200.6 2.900 1.600-2.600 1.500-2.200 5 .8 6.100z" fill="#111"/></svg>
          <b>Fusion 360</b><span>File</span><span>Edit</span><span>View</span><span>Window</span><span>Share</span><span>Help</span>
        </div>
        <div class="status">
          ${place(statusIcons)}
          <span class="pct">63%</span>
          <svg class="batt" width="24" height="11" viewBox="0 0 24 11"><rect x=".5" y=".5" width="20" height="10" rx="2" fill="none" stroke="#222"/><rect x="2" y="2" width="12" height="7" fill="#111"/><rect x="22" y="3.500" width="1.500" height="4" fill="#222"/></svg>
          <span class="clock">Sat Mar 18  10:06:12 PM</span>
          <svg class="search" width="15" height="15" viewBox="0 0 15 15"><circle cx="6" cy="6" r="4.700" fill="none" stroke="#222" stroke-width="1.300"/><path d="M9.500 9.500l5 5" stroke="#222" stroke-width="1.500"/></svg>
          <svg class="list" width="19" height="12" viewBox="0 0 19 12"><path d="M0 1.500h2.500M5 1.500h14M0 6h2.500M5 6h14M0 10.500h2.500M5 10.500h14" stroke="#111" stroke-width="1.800"/></svg>
        </div>
      </div>
      <div class="win">
        <div class="title"><div class="light"></div><div class="light"></div><div class="light"></div><div class="title-text">Autodesk Fusion 360</div></div>
        <div class="qat">
          ${place(qatLeft)}
          <div class="account">aewdffvfgegrvfb aewdffvfg... ${caret}</div>
          <div class="help"><svg width="16" height="16" viewBox="0 0 16 16"><circle cx="8" cy="8" r="8" fill="#555"/><text x="8" y="12.500" text-anchor="middle" font-family="Liberation Sans" font-weight="700" font-size="12" fill="#ddd">?</text></svg>${caret}</div>
        </div>
        <div class="tabs">
          <div class="tab">
            <svg width="16" height="14" viewBox="0 0 16 14"><path d="M0 3l6-3 10 2v8l-6 4-10-3z" fill="#8a8a8a"/><path d="M0 3l10 2 6-3-10-2z" fill="#b5b5b5"/><path d="M10 5v9l6-4V2z" fill="#666"/></svg>
            <span class="name">Fidget S...lean v1*</span>
            <svg class="o" width="10" height="10" viewBox="0 0 10 10"><circle cx="5" cy="5" r="4" fill="none" stroke="#7cc7b5" stroke-width="1.300"/></svg>
            <svg class="x" width="10" height="10" viewBox="0 0 10 10"><path d="M1 1l8 8M9 1l-8 8" stroke="#888" stroke-width="2.200"/></svg>
          </div>
          <svg class="chev" width="13" height="8" viewBox="0 0 13 8"><path d="M1 7l5.500-5L12 7" fill="none" stroke="#888" stroke-width="2"/></svg>
        </div>
        <div class="canvas">
          ${this.scene()}
          ${this.ribbon()}
          <div class="panel browser">
            <svg width="11" height="8" viewBox="0 0 11 8"><path d="M5 0v8L0 4zM10.500 0v8l-5-4z" fill="#333"/></svg>
            <span class="t">BROWSER</span>
            <div class="end"><svg width="10" height="10" viewBox="0 0 10 10"><circle cx="5" cy="5" r="5" fill="#222"/><path d="M2 5h6" stroke="#eee" stroke-width="1.500"/></svg><span class="grip"></span></div>
          </div>
          ${this.tree()}
          <div class="panel comm">COMMENTS
            <div class="end"><svg width="10" height="10" viewBox="0 0 10 10"><circle cx="5" cy="5" r="5" fill="#222"/><path d="M2 5h6M5 2v6" stroke="#eee" stroke-width="1.500"/></svg><span class="grip"></span></div>
          </div>
          <div class="tip">This is the timeline.<br/>Features are captured here.</div>
          <div class="nav a">${place(navA)}</div>
          <div class="nav b">${place(navB)}</div>
          ${this.cube()}
          <div class="gs">
            <svg width="11" height="8" viewBox="0 0 11 8"><path d="M5 0v8L0 4zM10.500 0v8l-5-4z" fill="#333"/></svg>
            <span class="v">GETTING STARTED</span>
          </div>
        </div>
        <div class="timeline">
          <div class="tl-ctl">
            <svg width="14" height="14" viewBox="0 0 14 14"><path d="M1 0h2v14H1zM13 0v14L3 7z" fill="#555"/></svg>
            <svg class="g1" width="14" height="14" viewBox="0 0 14 14"><path d="M9 1v12L1 7zM10.500 5h2v4h-2z" fill="#555"/></svg>
            <svg class="g1" width="14" height="16" viewBox="0 0 14 16"><path d="M1 1v14l12-7z" fill="#555"/></svg>
            <svg width="14" height="14" viewBox="0 0 14 14"><path d="M5 1v12l8-6zM1 5h2v4H1z" fill="#555"/></svg>
            <svg class="g1" width="14" height="14" viewBox="0 0 14 14"><path d="M1 0v14l10-7zM11 0h2v14h-2z" fill="#555"/></svg>
          </div>
          <div class="feat">${sketchMini}${sketchMini}</div>
          <div class="bracket"></div>
          <svg class="marker" width="12" height="33" viewBox="0 0 12 33"><path d="M0 0h12v3l-5 6v24H5V9L0 3z" fill="#666"/></svg>
          <svg class="gear" width="16" height="16" viewBox="0 0 16 16"><circle cx="8" cy="8" r="5" fill="none" stroke="#666" stroke-width="3"/><circle cx="8" cy="8" r="7" fill="none" stroke="#666" stroke-width="2" stroke-dasharray="2.500 3"/></svg>
        </div>
      </div>
      <div class="bottom">
        <div class="marks">
          <span style="left:40px">Workshop</span><span style="left:103px">Food</span><span style="left:169px;top:16px">Knife</span><span style="left:234px">Gift Ideas</span><span style="left:299px">Pottery</span><span style="left:362px">Etsy</span>
        </div>
        <div class="dock">
          ${docIcons.map((d) => html`<div class="slot ${d.dot ? "dot" : ""}">${d.ic}</div>`)}
          <div class="sep"></div>
          ${docRight.map((d) => html`<div class="slot">${d}</div>`)}
        </div>
        <div class="gl"><div class="glow"></div></div>
        <div class="proj">Project Video<br/>Ideas</div>
      </div>
    `;
  }
}
